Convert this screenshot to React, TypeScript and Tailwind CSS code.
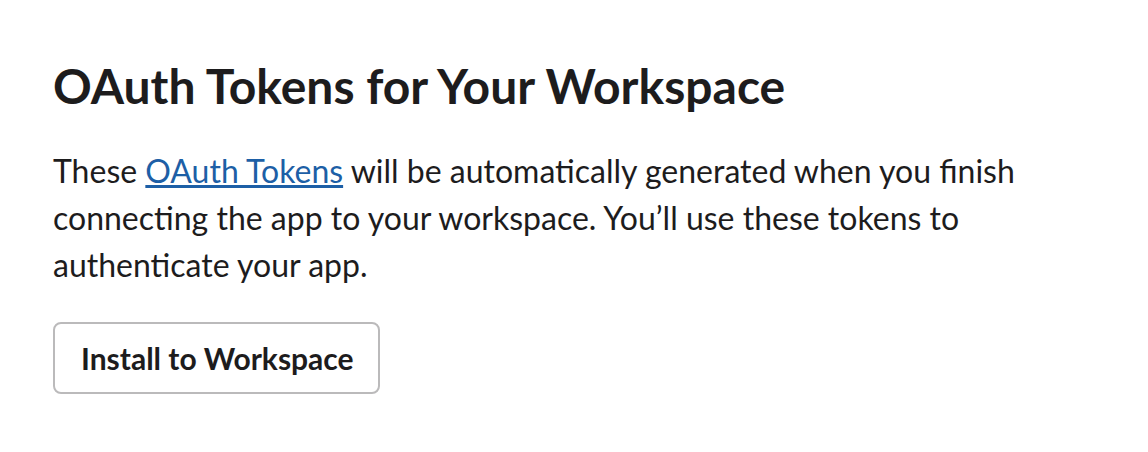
import React from "react";

function App() {
  return (
    <div className="min-h-screen bg-white text-[#1d1c1d] font-['Lato',sans-serif]">
      <div className="px-[53px] pt-[56px]">
        <h1 className="text-[48px] font-bold leading-[60px] mb-[31px]">
          OAuth Tokens for Your Workspace
        </h1>
        <p className="text-[32px] leading-[47px] max-w-[1000px] mb-[34px]">
          These{" "}
          <a href="#" className="text-[#1d5fa6] underline">
            OAuth Tokens
          </a>{" "}
          will be automatically generated when you finish connecting the app to your
          workspace. You’ll use these tokens to authenticate your app.
        </p>
        <button className="h-[72px] pl-[26px] pr-[24px] border-2 border-[#bbbabb] rounded-[8px] bg-white text-[30px] font-bold">
          Install to Workspace
        </button>
      </div>
    </div>
  );
}

export default App;
